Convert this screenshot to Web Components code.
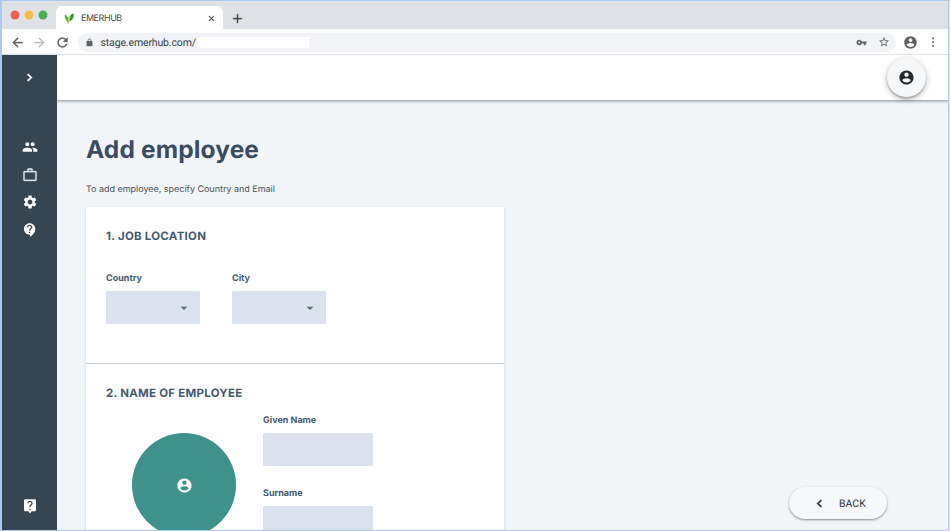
<!DOCTYPE html>
<html lang="en">
<head>
<meta charset="utf-8">
<title>EMERHUB</title>
<style>
html,body{margin:0;height:100%;overflow:hidden}
body{font-family:Inter,"Open Sans",sans-serif;text-rendering:geometricPrecision;background:#dfeafa}
</style>
</head>
<body>
<app-window></app-window>
<script>
const icons={
 account:'<path d="M12 2C6.48 2 2 6.48 2 12s4.48 10 10 10 10-4.48 10-10S17.52 2 12 2zm0 3c1.66 0 3 1.34 3 3s-1.34 3-3 3-3-1.34-3-3 1.34-3 3-3zm0 14.2c-2.5 0-4.71-1.28-6-3.22.03-1.99 4-3.08 6-3.08 1.99 0 5.97 1.09 6 3.08-1.29 1.94-3.5 3.22-6 3.22z"/>',
 people:'<path d="M16 11c1.66 0 2.99-1.34 2.99-3S17.66 5 16 5s-3 1.34-3 3 1.34 3 3 3zm-8 0c1.66 0 2.99-1.34 2.99-3S9.66 5 8 5 5 6.34 5 8s1.34 3 3 3zm0 2c-2.33 0-7 1.17-7 3.5V19h14v-2.5c0-2.33-4.67-3.5-7-3.5zm8 0c-.29 0-.62.02-.97.05 1.16.84 1.97 1.97 1.97 3.45V19h6v-2.5c0-2.33-4.67-3.5-7-3.5z"/>',
 work:'<path d="M14 6V4h-4v2h4zM4 8v11h16V8H4zm16-2c1.11 0 2 .89 2 2v11c0 1.11-.89 2-2 2H4c-1.11 0-2-.89-2-2V8c0-1.11.89-2 2-2h4V4c0-1.11.89-2 2-2h4c1.11 0 2 .89 2 2v2h4z" fill-rule="evenodd" stroke="currentColor" stroke-width=".4"/>',
 settings:'<path d="M19.14 12.94c.04-.3.06-.61.06-.94s-.02-.64-.07-.94l2.03-1.58c.18-.14.23-.41.12-.61l-1.92-3.32c-.12-.22-.37-.29-.59-.22l-2.39.96c-.5-.38-1.03-.7-1.62-.94l-.36-2.54c-.04-.24-.24-.41-.48-.41h-3.84c-.24 0-.43.17-.47.41l-.36 2.54c-.59.24-1.13.57-1.62.94l-2.39-.96c-.22-.08-.47 0-.59.22L2.74 8.87c-.12.21-.08.47.12.61l2.03 1.58c-.05.3-.09.63-.09.94s.02.64.07.94l-2.03 1.58c-.18.14-.23.41-.12.61l1.92 3.32c.12.22.37.29.59.22l2.39-.96c.5.38 1.03.7 1.62.94l.36 2.54c.05.24.24.41.48.41h3.84c.24 0 .44-.17.47-.41l.36-2.54c.59-.24 1.13-.56 1.62-.94l2.39.96c.22.08.47 0 .59-.22l1.92-3.32c.12-.22.07-.47-.12-.61l-2.01-1.58zM12 15.6c-1.98 0-3.6-1.62-3.6-3.6s1.62-3.6 3.6-3.6 3.6 1.62 3.6 3.6-1.62 3.6-3.6 3.6z"/>',
 support:'<path d="M11.5 2C6.81 2 3 5.81 3 10.500S6.810 19 11.500 19h.5v3c4.860-2.340 8-7 8-11.500C20 5.810 16.190 2 11.500 2zm1 14.500h-2v-2h2v2zm0-3.500h-2c0-3.250 3-3 3-5 0-1.100-.9-2-2-2s-2 .9-2 2h-2c0-2.210 1.790-4 4-4s4 1.790 4 4c0 2.500-3 2.750-3 5z"/>',
 help:'<path d="M19 2H5c-1.110 0-2 .9-2 2v14c0 1.100.89 2 2 2h4l3 3 3-3h4c1.100 0 2-.9 2-2V4c0-1.100-.9-2-2-2zm-6 16h-2v-2h2v2zm2.070-7.750-.9.920C13.450 11.900 13 12.500 13 14h-2v-.5c0-1.100.45-2.100 1.170-2.830l1.240-1.260c.37-.36.59-.86.59-1.410 0-1.100-.9-2-2-2s-2 .9-2 2H8c0-2.210 1.790-4 4-4s4 1.790 4 4c0 .88-.36 1.680-.93 2.250z"/>',
 right:'<path d="M10 6 8.590 7.410 13.170 12l-4.580 4.590L10 18l6-6z" stroke="currentColor"/>',
 left:'<path d="M15.410 7.410 14 6l-6 6 6 6 1.410-1.410L10.830 12z" stroke="currentColor"/>',
 down:'<path d="m7 10 5 5 5-5z"/>',
 back:'<path d="M20 11H7.830l5.590-5.590L12 4l-8 8 8 8 1.410-1.410L7.830 13H20v-2z" stroke="currentColor" stroke-width=".4"/>',
 forward:'<path d="m12 4-1.410 1.410L16.170 11H4v2h12.170l-5.580 5.590L12 20l8-8z" stroke="currentColor" stroke-width=".4"/>',
 reload:'<path d="M17.650 6.350A7.958 7.958 0 0 0 12 4c-4.420 0-7.990 3.580-7.990 8s3.570 8 7.990 8c3.730 0 6.840-2.550 7.730-6h-2.080A5.990 5.990 0 0 1 12 18c-3.310 0-6-2.690-6-6s2.690-6 6-6c1.660 0 3.140.69 4.220 1.780L13 11h7V4l-2.350 2.350z" stroke="currentColor" stroke-width=".4"/>',
 lock:'<path d="M18 8h-1V6c0-2.760-2.240-5-5-5S7 3.240 7 6v2H6c-1.100 0-2 .9-2 2v10c0 1.100.9 2 2 2h12c1.100 0 2-.9 2-2V10c0-1.100-.9-2-2-2zM9 8V6c0-1.660 1.340-3 3-3s3 1.340 3 3v2H9z"/>',
 key:'<path d="M12.650 10A5.990 5.990 0 0 0 7 6c-3.310 0-6 2.690-6 6s2.690 6 6 6a5.990 5.990 0 0 0 5.650-4H17v4h4v-4h2v-4H12.650zM7 14c-1.100 0-2-.9-2-2s.9-2 2-2 2 .9 2 2-.9 2-2 2z"/>',
 star:'<path d="m22 9.240-7.190-.62L12 2 9.190 8.630 2 9.240l5.460 4.730L5.820 21 12 17.270 18.180 21l-1.630-7.030L22 9.240zM12 15.400l-3.760 2.270 1-4.280-3.320-2.880 4.380-.38L12 6.100l1.710 4.040 4.380.38-3.320 2.880 1 4.280L12 15.400z"/>',
 more:'<circle cx="12" cy="4.500" r="2"/><circle cx="12" cy="12" r="2"/><circle cx="12" cy="19.500" r="2"/>',
 close:'<path d="M19 6.410 17.590 5 12 10.590 6.410 5 5 6.410 10.590 12 5 17.590 6.410 19 12 13.410 17.590 19 19 17.590 13.410 12z" stroke="currentColor"/>',
 plus:'<path d="M19 13h-6v6h-2v-6H5v-2h6V5h2v6h6z" stroke="currentColor" stroke-width=".4"/>',
 leaf:'<path fill="#5ea53b" d="M9 23C8 17 0 13 2 3c6 3 8 9 8 15z"/><path fill="#2d9439" d="M10 19C8 11 12 4 21 1c1 9-2 14-11 18z"/><path fill="#b5d768" d="M8 23C8 14 9 8 14 4c1 6-2 11-3 19z"/>'
};
const define=(name,html)=>customElements.define(name,class extends HTMLElement{
 constructor(){super();this.attachShadow({mode:'open'}).innerHTML=html}
});
customElements.define('ui-icon',class extends HTMLElement{
 connectedCallback(){
  const s=this.getAttribute('size')||16;
  if(!this.shadowRoot)this.attachShadow({mode:'open'}).innerHTML=`<style>:host{display:block;flex:none;width:${s}px;height:${s}px}svg{display:block;fill:currentColor}</style><svg width="${s}" height="${s}" viewBox="0 0 24 24">${icons[this.getAttribute('name')]}</svg>`;
 }
});
define('browser-tabs',`<style>
:host{display:flex;height:28px;background:#dee2e6;align-items:flex-end;box-sizing:border-box;color:#45494d}
.lights{display:flex;gap:4px;align-self:flex-start;padding:9px 8px 0 8px}
.lights i{width:10px;height:10px;border-radius:50%;box-sizing:border-box;transform:scale(.9)}
.tab{display:flex;align-items:center;width:167px;height:23px;border-radius:6px 6px 0 0;background:#fff;box-sizing:border-box;padding:1px 7px 0 8px}
.tab span{font-size:9px;letter-spacing:-.46px;margin-left:6px;flex:1}
.plus{margin:0 0 3px 7px}
</style><div class="lights"><i style="background:#ee6057"></i><i style="background:#f8bd44"></i><i style="background:#4cb050"></i></div>
<div class="tab"><ui-icon name="leaf" size="11"></ui-icon><span>EMERHUB</span><ui-icon name="close" size="9"></ui-icon></div><ui-icon class="plus" name="plus" size="15"></ui-icon>`);
define('browser-bar',`<style>
:host{display:flex;align-items:center;height:26px;background:#fff;border-bottom:1px solid #dfe2e5;box-sizing:border-box;color:#5f6368;padding:1px 0 0 7.500px}
.nav{display:flex;gap:7.500px}
.nav .dim{color:#bbbec1}
.addr{display:flex;align-items:center;height:19px;width:818px;border-radius:10px;background:#f1f3f6;margin-left:8px;box-sizing:border-box;padding:0 6px 0 7px}
.addr span{font:10.500px Roboto,sans-serif;letter-spacing:-.14px;color:#3d4044;margin-left:7px}
.blank{width:112px;height:11px;background:#fff;margin-left:1px}
.key{margin-left:auto;margin-right:11px}
.user{margin-left:7.500px}.more{margin-left:9px}
</style><div class="nav"><ui-icon name="back" size="15"></ui-icon><ui-icon class="dim" name="forward" size="15"></ui-icon><ui-icon name="reload" size="15"></ui-icon></div>
<div class="addr"><ui-icon name="lock" size="9"></ui-icon><span>stage.emerhub.com/</span><div class="blank"></div><ui-icon class="key" name="key" size="11"></ui-icon><ui-icon name="star" size="12"></ui-icon></div>
<ui-icon class="user" name="account" size="15"></ui-icon><ui-icon class="more" name="more" size="12"></ui-icon>`);
define('side-nav',`<style>
:host{display:flex;flex-direction:column;align-items:center;width:55px;flex:none;background:#354552;color:#fff;box-sizing:border-box;padding:15px 0 16px}
.menu{display:flex;flex-direction:column;gap:11.700px;padding-top:54px}
.help{margin-top:auto}
.work{color:#dce5ec}
</style><ui-icon name="right" size="15"></ui-icon>
<div class="menu"><ui-icon name="people" size="16"></ui-icon><ui-icon class="work" name="work" size="16"></ui-icon><ui-icon name="settings" size="16"></ui-icon><ui-icon name="support" size="16"></ui-icon></div>
<ui-icon class="help" name="help" size="16"></ui-icon>`);
define('top-header',`<style>
:host{display:flex;justify-content:flex-end;align-items:center;flex:none;height:45px;box-sizing:border-box;background:#fff;box-shadow:0 1px 3px #7d8791;padding-right:22px;z-index:1}
.user{display:flex;align-items:center;justify-content:center;width:39px;height:39px;border-radius:50%;background:#f6f7f8;color:#25292d;box-shadow:0 2px 2px #0003,0 2px 6px #0004}
</style><div class="user"><ui-icon name="account" size="17"></ui-icon></div>`);
define('form-section',`<style>
:host{display:block;box-sizing:border-box;padding:20px 20px 0;background:#fff}
h2{font-size:11.500px;line-height:17px;font-weight:700;color:#435970;margin:0;letter-spacing:.25px}
h2{padding-top:.5px;margin-bottom:-.5px}
</style><h2><slot name="title"></slot></h2><slot></slot>`);
define('form-field',`<style>
:host{display:block;width:94px}
label{display:block;font-size:9px;line-height:13px;font-weight:700;color:#435970;padding-top:1px}
.box{display:flex;align-items:center;justify-content:flex-end;height:33px;margin-top:6px;background:#dce2ed;border-radius:1px;color:#5c6874;box-sizing:border-box;padding-right:8px}
</style><label><slot></slot></label><div class="box"><slot name="icon"></slot></div>`);
define('back-button',`<style>
:host{position:absolute;left:787px;top:486px;display:flex;align-items:center;width:98px;height:32px;border-radius:16px;background:#f7f8fa;box-shadow:0 1px 2px #0005,0 1px 3px #0002;box-sizing:border-box;padding-left:23px;color:#303439;font:10.500px Roboto,sans-serif}
span{margin-left:12px}
</style><ui-icon name="left" size="15"></ui-icon><span>BACK</span>`);
define('employee-page',`<style>
:host{display:flex;flex-direction:column;flex:1;min-width:0;background:#f1f5f8;overflow:hidden}
main{padding:31px 0 0 29px}
h1{font-size:24.500px;line-height:36px;font-weight:700;margin:0;color:#3b4c62;letter-spacing:.13px}
p{font-size:9px;line-height:14px;color:#4b5056;margin:16px 0 10px;letter-spacing:-.02px}
.card{width:418px;background:#fff;box-shadow:0 1px 3px #8292a35c;border-radius:1px}
.first{height:157px;border-bottom:1px solid #cbd1db}
.row{display:flex;gap:32px;margin-top:27px}
.second{height:180px}
.person{display:flex;align-items:flex-start;margin-top:12px}
.avatar{display:flex;align-items:center;justify-content:center;width:104px;height:104px;border-radius:50%;background:#3e928b;color:#fff;margin:20px 27px 0 26px}
.fields{display:flex;flex-direction:column;gap:19.500px}
.fields form-field{width:110px}
</style><top-header></top-header><main><h1>Add employee</h1><p>To add employee, specify Country and Email</p>
<div class="card"><form-section class="first"><span slot="title">1. JOB LOCATION</span><div class="row"><form-field>Country<ui-icon slot="icon" name="down" size="16"></ui-icon></form-field><form-field>City<ui-icon slot="icon" name="down" size="16"></ui-icon></form-field></div></form-section>
<form-section class="second"><span slot="title">2. NAME OF EMPLOYEE</span><div class="person"><div class="avatar"><ui-icon name="account" size="17"></ui-icon></div><div class="fields"><form-field>Given Name</form-field><form-field>Surname</form-field></div></div></form-section></div></main>`);
define('app-window',`<style>
:host{display:flex;flex-direction:column;width:949px;height:531px;box-sizing:border-box;border:solid #a9c9f2;border-width:1px 1px 1px 2px;position:relative;overflow:hidden}
.body{display:flex;flex:1;min-height:0}
</style><browser-tabs></browser-tabs><browser-bar></browser-bar><div class="body"><side-nav></side-nav><employee-page></employee-page></div><back-button></back-button>`);
</script>
</body>
</html>
